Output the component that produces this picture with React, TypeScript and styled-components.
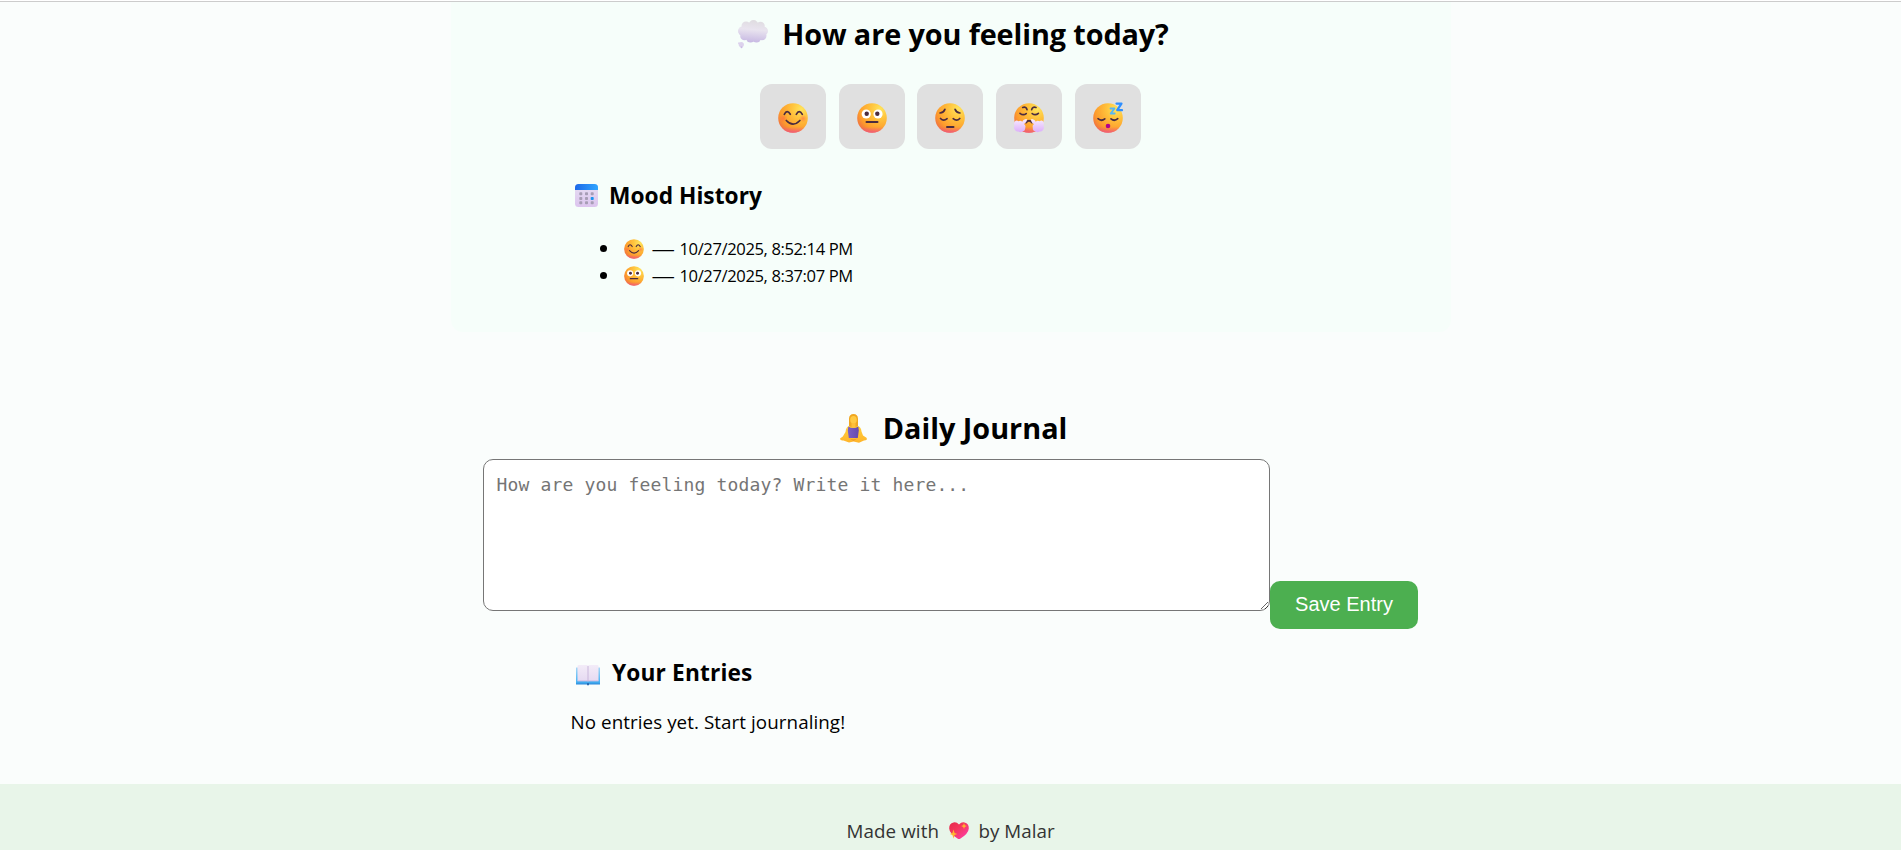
import React, { useId } from "react";
import styled, { createGlobalStyle } from "styled-components";

const GlobalStyle = createGlobalStyle`
  * { box-sizing: border-box; }
  body {
    margin: 0;
    height: 850px;
    overflow: hidden;
    background: #fafdfc;
    color: #000;
    font-family: "Segoe UI", "Open Sans", "Noto Sans", sans-serif;
  }
`;

const Page = styled.div`
  display: flex;
  flex-direction: column;
  align-items: center;
  height: 850px;
  overflow: hidden;
`;

const NavEdge = styled.div`
  width: 100%;
  height: 2px;
  flex: none;
  background: #fff;
  border-bottom: 1px solid #ccc;
`;

const MoodSection = styled.section`
  width: 1000px;
  height: 330px;
  flex: none;
  padding: 10px 120px 0;
  border-radius: 0 0 12px 12px;
  background: #f6fefa;
`;

const JournalSection = styled.section`
  width: 936px;
  flex: none;
  margin-top: 74px;
`;

const Title = styled.h2`
  display: flex;
  align-items: center;
  justify-content: center;
  height: 43px;
  margin: 0;
  font-size: 28.8px;
  font-weight: 700;
  line-height: 43px;
  white-space: nowrap;
`;

const Subtitle = styled.h3`
  display: flex;
  align-items: center;
  height: 40px;
  margin: 0;
  padding-top: 1px;
  font-size: 22.7px;
  font-weight: 700;
  line-height: 40px;
  white-space: nowrap;
`;

const Label = styled.span<{ $track?: number }>`
  letter-spacing: ${(p) => p.$track ?? 0}px;
`;

const Glyph = styled.svg<{ $size: number; $left?: number; $right?: number; $drop?: number }>`
  display: block;
  flex: none;
  overflow: visible;
  width: ${(p) => p.$size}px;
  height: ${(p) => p.$size}px;
  margin: ${(p) => p.$drop ?? 0}px ${(p) => p.$right ?? 0}px 0 ${(p) => p.$left ?? 0}px;
`;

const MoodRow = styled.div`
  display: flex;
  justify-content: center;
  gap: 12.75px;
  margin: 29px 0 26px;
  padding-right: 0.4px;
`;

const MoodButton = styled.button`
  display: flex;
  align-items: center;
  justify-content: center;
  width: 66px;
  height: 65px;
  padding: 3px 0 0;
  border: 0;
  border-radius: 12px;
  background: #e0e0e0;
`;

const HistoryList = styled.ul`
  margin: 20px 0 0;
  padding: 0 0 0 29px;
  list-style: none;
`;

const HistoryItem = styled.li`
  display: flex;
  align-items: center;
  height: 27px;
  font-size: 16.6px;
  line-height: 27px;
  white-space: nowrap;

  &::before {
    content: "";
    width: 7px;
    height: 7px;
    margin-right: 17px;
    border-radius: 50%;
    background: #000;
  }
`;

const Dash = styled.span`
  width: 27px;
  font-size: 17px;
  line-height: 24px;
  text-indent: -1px;
  transform: scaleX(1.38);
  transform-origin: left;
`;

const EntryRow = styled.div`
  display: flex;
  align-items: flex-end;
  margin-top: 10px;
`;

const EntryBox = styled.textarea`
  display: block;
  width: 787px;
  height: 152px;
  margin: 0 0 18px;
  padding: 12px 12px 12px 13px;
  border: 1px solid #767676;
  border-radius: 10px;
  background: #fff;
  font-family: Consolas, "DejaVu Sans Mono", monospace;
  font-size: 18px;
  line-height: 25px;
  letter-spacing: 0.16px;
  resize: both;

  &::placeholder { color: #757575; }
`;

const SaveButton = styled.button`
  width: 148px;
  height: 48px;
  padding: 0 0 2px 1px;
  border: 0;
  border-radius: 10px;
  background: #4caf50;
  color: #fff;
  font: 20px "Liberation Sans", Arial, sans-serif;
`;

const Entries = styled.div`
  margin: 23px 0 0 88px;
`;

const Empty = styled.p`
  height: 30px;
  margin: 15px 0 0;
  font-size: 18.8px;
  line-height: 30px;
`;

const Footer = styled.footer`
  display: flex;
  justify-content: center;
  width: 100%;
  height: 66px;
  flex: none;
  margin-top: 47px;
  padding-top: 32px;
  background: #e8f5e9;
  color: #333;
  font-size: 18.8px;
  line-height: 30px;
`;

type Mood = "smile" | "neutral" | "pensive" | "huff" | "sleep";
interface IconProps { size: number; left?: number; right?: number; drop?: number }

const INK = "#4a2b3f";

function Face({ mood, size, left, right, drop }: IconProps & { mood: Mood }) {
  const id = useId();
  return (
    <Glyph viewBox="0 0 30 30" $size={size} $left={left} $right={right} $drop={drop}>
      <defs>
        <radialGradient id={id + "a"} cx="0.78" cy="0.2" r="0.95">
          <stop offset="0" stopColor="#ffe45c" />
          <stop offset="0.35" stopColor="#ffc23c" />
          <stop offset="0.75" stopColor="#fd9c2c" />
          <stop offset="1" stopColor="#ee6b45" />
        </radialGradient>
        <linearGradient id={id + "b"} x1="0" y1="0" x2="0" y2="1">
          <stop offset="0.8" stopColor="#f0508c" stopOpacity="0" />
          <stop offset="1" stopColor="#f0508c" stopOpacity="0.8" />
        </linearGradient>
        <linearGradient id={id + "c"} x1="0" y1="0" x2="0" y2="1">
          <stop offset="0" stopColor="#f8ecff" />
          <stop offset="1" stopColor="#dcaefa" />
        </linearGradient>
        <radialGradient id={id + "d"}>
          <stop offset="0" stopColor="#ff5f4a" stopOpacity="0.55" />
          <stop offset="1" stopColor="#ff5f4a" stopOpacity="0" />
        </radialGradient>
      </defs>
      <circle cx="15" cy="15" r="14.8" fill={`url(#${id}a)`} />
      <circle cx="15" cy="15" r="14.8" fill={`url(#${id}b)`} />
      <g fill="none" stroke={INK} strokeWidth="1.7" strokeLinecap="round" strokeLinejoin="round">
        {mood === "smile" && (
          <>
            <circle cx="5.3" cy="15.500" r="4" fill={`url(#${id}d)`} stroke="none" />
            <circle cx="25" cy="15.500" r="4" fill={`url(#${id}d)`} stroke="none" />
            <path d="M6.3 11.3q2.8-5.4 6 0M18.3 11.3q2.9-5.4 6 0" />
            <path d="M8.3 17.5q6.7 7.2 13.6 0" />
          </>
        )}
        {mood === "neutral" && (
          <>
            <circle cx="9.2" cy="11" r="4.6" fill="#fff" stroke="none" />
            <circle cx="21" cy="11" r="4.6" fill="#fff" stroke="none" />
            <circle cx="9.7" cy="10.8" r="2.2" fill={INK} stroke="none" />
            <circle cx="20.3" cy="10.8" r="2.2" fill={INK} stroke="none" />
            <path d="M9.5 19h11" strokeWidth="2" />
          </>
        )}
        {mood === "pensive" && (
          <>
            <path d="M5 10q3.6-.2 4.9-3.6M25 10q-3.6-.2-4.9-3.6M5.5 15.5q3 3.2 6.6.2M18.2 15.7q3.6 3 6.6-.2" />
            <path d="M12 24h6.5" strokeWidth="2" />
          </>
        )}
        {mood === "huff" && (
          <>
            <path d="M8.7 4.5q3.6-1.2 4.3 2.2M22 4.5q-3.6-1.2-4.3 2.2M6 10.3q3.2 2.6 6.2.3M18.2 10.6q3.2 2.3 6.2-.3" />
            <path d="M12 19.5q3-3.500 6 0" strokeWidth="2" />
            <g stroke="none" fill={`url(#${id}c)`}>
              <path d="M12.800 16Q9.500 16 8.300 18.700Q6.500 17 4.500 18.200Q2 16.800.7 18.800Q-.4 20.700.5 22.500Q-.8 25 .9 26.700Q1.700 29 4.300 28.400Q6.500 30 8.500 28.400Q11.500 27.800 11.200 25Q12.200 22.500 10 21Q13.300 19.500 12.800 16z" />
              <path d="M17.200 16Q20.500 16 21.700 18.700Q23.500 17 25.500 18.200Q28 16.800 29.300 18.800Q30.400 20.700 29.500 22.500Q30.800 25 29.100 26.700Q28.300 29 25.700 28.400Q23.500 30 21.500 28.400Q18.500 27.800 18.800 25Q17.800 22.500 20 21Q16.700 19.500 17.200 16z" />
            </g>
          </>
        )}
        {mood === "sleep" && (
          <>
            <path d="M5 15.7q3.4 3 6.8.2M18 15.9q3.4 2.8 6.800-.2" />
            <circle cx="15" cy="23" r="2.3" fill="#b3008c" stroke="none" />
            <path d="M23.5.6h5L24.2 7.2h4.8" stroke="#2f8fff" strokeWidth="2.2" />
            <path d="M17.5 5.5h4l-3.8 5h4" stroke="#55b7f5" strokeWidth="1.8" />
          </>
        )}
      </g>
    </Glyph>
  );
}

function Thought() {
  return (
    <Glyph viewBox="0 0 30 30" $size={30} $left={6} $right={14} $drop={3}>
      <defs>
        <linearGradient id="cloud" gradientUnits="userSpaceOnUse" x1="16" y1="0" x2="14" y2="24">
          <stop offset="0" stopColor="#dfdce0" />
          <stop offset="0.4" stopColor="#e9e4ef" />
          <stop offset="1" stopColor="#c3b3e1" />
        </linearGradient>
      </defs>
      <g fill="url(#cloud)">
        <ellipse cx="15" cy="11.5" rx="12" ry="9.5" />
        <circle cx="8" cy="6" r="4.5" />
        <circle cx="15.5" cy="4.8" r="4.7" />
        <circle cx="22.5" cy="6" r="4.3" />
        <circle cx="4.5" cy="11" r="4.5" />
        <circle cx="25.7" cy="11" r="4.3" />
        <circle cx="6.5" cy="16" r="4.3" />
        <circle cx="12.5" cy="18" r="4.5" />
        <circle cx="18.5" cy="18" r="4.5" />
        <circle cx="24" cy="15.8" r="4.5" />
      </g>
      <circle cx="3.3" cy="24.5" r="2.6" fill="#dcd2ec" />
      <circle cx="1" cy="23.3" r="1" fill="#dcd2ec" />
      <circle cx="3.5" cy="27.3" r="1" fill="#cbbbe4" />
    </Glyph>
  );
}

function Calendar() {
  return (
    <Glyph viewBox="0 0 23 23" $size={23} $left={4} $right={11.5} $drop={0}>
      <defs>
        <linearGradient id="calTop"><stop stopColor="#1d68e8" /><stop offset="1" stopColor="#2fa6ff" /></linearGradient>
        <linearGradient id="calBody" x1="0" y1="0" x2="0" y2="1"><stop stopColor="#e6dff2" /><stop offset="1" stopColor="#dcc4ee" /></linearGradient>
      </defs>
      <rect width="23" height="23" rx="3.5" fill="url(#calBody)" />
      <path d="M0 6V3.5Q0 0 3.5 0h16Q23 0 23 3.5V6z" fill="url(#calTop)" />
      <g fill="#a79db5">
        {[8.3, 13, 17.3].map((y) => [4.3, 10, 15.7].map((x) => (
          <rect key={`${x}-${y}`} x={x} y={y} width="3" height="3" rx=".8" fill={x > 15 && y === 13 ? "#1b93ee" : undefined} />
        )))}
      </g>
    </Glyph>
  );
}

function Yoga() {
  return (
    <Glyph viewBox="0 0 30 30" $size={30} $left={5} $right={14} $drop={2}>
      <defs>
        <linearGradient id="skin" x1="0" y1="0" x2="0" y2="1"><stop stopColor="#ffd13c" /><stop offset="1" stopColor="#ffb42a" /></linearGradient>
        <linearGradient id="vest" x1="0" y1="0" x2="1" y2="0"><stop stopColor="#7c5fc4" /><stop offset="1" stopColor="#6649ad" /></linearGradient>
      </defs>
      <path d="M10.5 12Q7 12.5 6.5 18L3.8 22.5 1 24.5Q1 27 4.5 26.5L10 28.5 14.5 27.5 20 28.8 25 26.5Q29 26.5 27.5 23.8L24 21.5 22.5 17.5Q22 12.5 18.5 12z" fill="url(#skin)" />
      <path d="M10 12V4.500Q10.300 0 14.500 0T19 4.500V12q-4.500 2.500-9 0z" fill="#f0a720" />
      <path d="M9.300 12.500q2.200 1.500 5 1.500t5-1.500l.5 4-1 7.500h-9l-1-7.500z" fill="url(#vest)" />
      <ellipse cx="14.500" cy="5.800" rx="3.300" ry="3.800" fill="#ffca43" />
      <path d="M12.500 9h4v4q-2 1.200-4 0z" fill="#ffbf38" />
      <path d="M10 24.5q4 1.500 8.500 0l-4 2.500z" fill="#ef9b29" />
    </Glyph>
  );
}

function Book() {
  return (
    <Glyph viewBox="0 0 24 20" $size={24} $left={5} $right={12.5} $drop={4}>
      <defs>
        <linearGradient id="page" x1="0" y1="0" x2="0" y2="1"><stop stopColor="#f3ecf8" /><stop offset="1" stopColor="#e6daf2" /></linearGradient>
        <linearGradient id="cover" x1="0" y1="0" x2="0" y2="1"><stop stopColor="#a8d6f5" /><stop offset=".85" stopColor="#45b4f5" /><stop offset="1" stopColor="#2b86d8" /></linearGradient>
      </defs>
      <path d="M0 2.5h24V19.500H0z" fill="url(#cover)" />
      <path d="M11 18h2v2.300h-2z" fill="#2a6cb4" />
      <path d="M1.500 1Q1.500 0 3 0h7.500Q12 0 12 1.200 12 0 13.500 0H21q1.500 0 1.500 1v15H1.500z" fill="url(#page)" />
      <path d="M11.500 1h1v15.500h-1z" fill="#c9b8dc" />
      <path d="M1.500 15.500h21v.9h-21z" fill="#c8b4df" />
    </Glyph>
  );
}

function Heart() {
  return (
    <Glyph viewBox="0 0 20 20" $size={20} $left={9.5} $right={10} $drop={5}>
      <defs>
        <linearGradient id="love" x1="0" y1="0" x2="1" y2="1"><stop stopColor="#e62a4c" /><stop offset=".4" stopColor="#f4365c" /><stop offset="1" stopColor="#ff3fb4" /></linearGradient>
      </defs>
      <path d="M10 3.5Q7.5.8 4.5 1.5 0 2.500.2 7.500.5 12.500 8.500 17.500q1.500 1 3 0Q19.500 12.500 19.800 7.500 20 2.500 15.500 1.500 12.500.8 10 3.500z" fill="url(#love)" />
      <path d="M4.5 8.5l1.100 3.400 2.700 1-2.700 1.100-1.100 3.600-1.100-3.600-2.500-1.100 2.500-1z" fill="#ffb52e" />
      <path d="M15 2l.8 2.200 2.100.8-2.100.9L15 8l-.8-2.100-2.100-.9 2.100-.8z" fill="#ffb52e" />
    </Glyph>
  );
}

const MOODS: Mood[] = ["smile", "neutral", "pensive", "huff", "sleep"];
const HISTORY: { mood: Mood; at: string }[] = [
  { mood: "smile", at: "10/27/2025, 8:52:14 PM" },
  { mood: "neutral", at: "10/27/2025, 8:37:07 PM" },
];

export default function App() {
  return (
    <Page>
      <GlobalStyle />
      <NavEdge />
      <MoodSection>
        <Title><Thought /><Label $track={-0.1}>How are you feeling today?</Label></Title>
        <MoodRow>
          {MOODS.map((m) => (
            <MoodButton key={m} aria-label={m}><Face mood={m} size={30} /></MoodButton>
          ))}
        </MoodRow>
        <Subtitle><Calendar /><Label $track={0.05}>Mood History</Label></Subtitle>
        <HistoryList>
          {HISTORY.map((h) => (
            <HistoryItem key={h.at}>
              <Face mood={h.mood} size={20} right={9} />
              <Dash>—</Dash>
              <Label $track={-0.4}>{h.at}</Label>
            </HistoryItem>
          ))}
        </HistoryList>
      </MoodSection>
      <JournalSection>
        <Title><Yoga /><Label>Daily Journal</Label></Title>
        <EntryRow>
          <EntryBox placeholder="How are you feeling today? Write it here..." />
          <SaveButton>Save Entry</SaveButton>
        </EntryRow>
        <Entries>
          <Subtitle><Book /><Label $track={0.15}>Your Entries</Label></Subtitle>
          <Empty><Label $track={0.07}>No entries yet. Start journaling!</Label></Empty>
        </Entries>
      </JournalSection>
      <Footer>
        <Label $track={0.1}>Made with</Label><Heart /><Label>by Malar</Label>
      </Footer>
    </Page>
  );
}
